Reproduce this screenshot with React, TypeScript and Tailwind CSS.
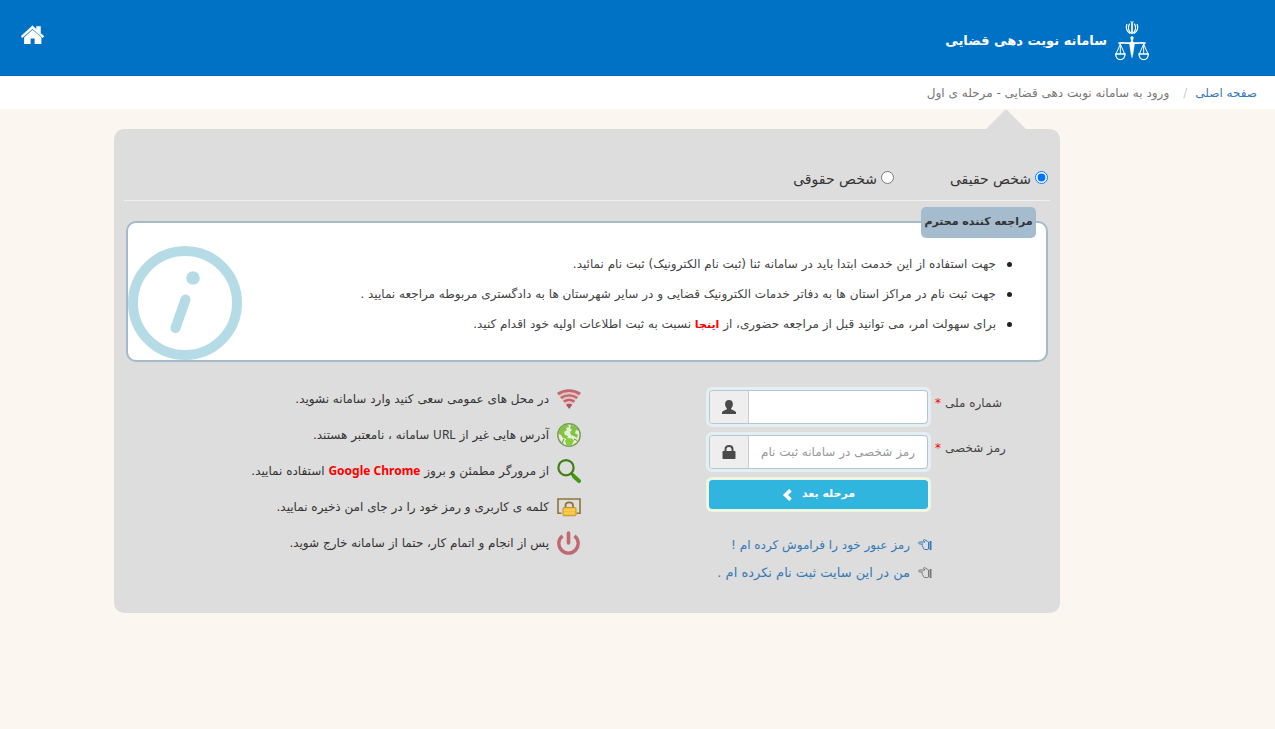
import type { ReactNode } from "react";

function JudiciaryLogo() {
  return (
    <svg viewBox="0 0 102 118" className="h-10 w-[34px] shrink-0" fill="none" stroke="#fff" strokeWidth="4" aria-hidden="true">
      <path d="M51 3v35" strokeWidth="5" />
      <path d="M44 7c-6 9-5 21 4 28M58 7c6 9 5 21-4 28" strokeWidth="3.5" />
      <path d="M36 8c-5 11-1 23 10 29M66 8c5 11 1 23-10 29" strokeWidth="3.5" />
      <path d="M46 1q5 3 10 0" strokeWidth="2.5" />
      <path d="M51 44l-5 5 3 8-2 6h8l-2-6 3-8z" fill="#fff" strokeWidth="1" />
      <path d="M10 66c14-5 26 3 41-2 15 5 27-3 41 2" strokeWidth="5" />
      <path d="M43 66h16l-5 32-3 12-3-12z" fill="#fff" strokeWidth="1" />
      <path d="M16 68L3 98M16 68l13 30M16 68v30" strokeWidth="3" />
      <path d="M86 68L73 98M86 68l13 30M86 68v30" strokeWidth="3" />
      <path d="M2 98h28c0 10-6 17-14 17S2 108 2 98zM72 98h28c0 10-6 17-14 17s-14-7-14-17z" />
    </svg>
  );
}

function HomeIcon() {
  return (
    <svg viewBox="0 0 24 20" className="h-5 w-6" aria-hidden="true">
      <path d="M11.500.8 15.500 4.500V1.400h4v6.800L23 11.300l-1.300 1.400L11.500 3.800 1.300 12.700 0 11.300z" fill="#fff" stroke="#fff" strokeWidth=".5" strokeLinejoin="round" />
      <path d="M11.500 4.700l8.900 7.800V19h-6.800v-5.500h-4V19h-6.500v-6.500z" fill="#fff" />
    </svg>
  );
}

function UserIcon() {
  return (
    <svg viewBox="0 0 14 14" className="size-3.5" fill="#4a4a4a" aria-hidden="true">
      <path d="M7 0c2.400 0 3.900 1.600 3.900 4 0 1.700-.7 3.300-1.700 4.200v1.100c.5.7 4.300 1.300 4.800 3V14H0v-1.700c.5-1.700 4.300-2.300 4.800-3V8.200C3.800 7.300 3.100 5.700 3.100 4 3.100 1.600 4.600 0 7 0z" />
    </svg>
  );
}

function LockIcon() {
  return (
    <svg viewBox="0 0 14 14" className="size-3.5" aria-hidden="true">
      <path d="M3.500 7V4.200C3.500 2.200 5 1 7 1s3.500 1.200 3.500 3.200V7" fill="none" stroke="#4a4a4a" strokeWidth="2" />
      <rect x=".5" y="6" width="13" height="8" rx=".7" fill="#4a4a4a" />
    </svg>
  );
}

function ChevronIcon() {
  return (
    <svg viewBox="0 0 10 12" className="h-3 w-2.5" aria-hidden="true">
      <path d="M8.500 1.200 3.500 6l5 4.800" fill="none" stroke="#fff" strokeWidth="3.600" />
    </svg>
  );
}

function HandIcon() {
  return (
    <svg viewBox="0 0 14 12" className="h-3 w-3.5 shrink-0" fill="none" stroke="currentColor" aria-hidden="true">
      <path d="M9.700 2.500 6.700.6C5.700.3 5.200 1.300 5.900 2L7 3H1.600C.3 3 .3 5 1.600 5H4.500C3.600 5.300 3.700 6.500 4.500 6.800c-.3.8.1 1.600.8 1.800-.1 1 .5 1.900 1.500 1.900h2.900c.3-.3.500-.5.800-.5V3c-.3 0-.6-.2-.8-.5z" strokeLinejoin="round" />
      <path d="M12.500 2v9" strokeWidth="2" />
    </svg>
  );
}

function WifiIcon() {
  return (
    <svg viewBox="0 0 24 24" className="size-6 shrink-0" fill="none" aria-hidden="true">
      <path d="M0 6C7 1.500 17 1.500 24 6L12.200 22z" fill="#e8c0c0" />
      <path d="M.9 7C7.500 2.600 16.500 2.600 23.100 7" stroke="#bd6a70" strokeWidth="2.800" />
      <path d="M3.800 11c5-3.300 11.500-3.300 16.500 0" stroke="#bd6a70" strokeWidth="2.500" />
      <path d="M6.700 14.700c3.400-2.300 7.400-2.300 10.800 0" stroke="#b9626a" strokeWidth="2.200" />
      <path d="M9 17.800q3.100-1.900 6.300 0L12.200 22z" fill="#b0525a" />
    </svg>
  );
}

function GlobeIcon() {
  return (
    <svg viewBox="0 0 24 24" className="size-6 shrink-0" aria-hidden="true">
      <circle cx="12" cy="12" r="11.200" fill="#e4efd9" stroke="#7a9a5a" strokeWidth="1.400" />
      <path d="M2 8C3.500 4 7 1.700 11 1.500l1 2.500-3 1 1 2-3 2 1 3 3 1-1 3-4-1-2-3-2.500-1z" fill="#82c341" />
      <path d="M14 2c4 .8 6.500 3 8 6l-3-1-1 3 3 2-1 3-3-2-3-1-1-3 2-2-2-2z" fill="#82c341" />
      <path d="M10 15l5 .5 2 2-2 4.500c-2 .7-4 .5-5.500 0L8 18z" fill="#8ccb3c" />
      <path d="M5 20l2-4M17 16l3 1.500" stroke="#5f8f35" />
    </svg>
  );
}

function SearchIcon() {
  return (
    <svg viewBox="0 0 24 24" className="size-6 shrink-0" fill="none" aria-hidden="true">
      <circle cx="9" cy="8.700" r="7.600" stroke="#3f7f14" strokeWidth="2.200" />
      <path d="M14.500 14.500l3 3" stroke="#3f7f14" strokeWidth="3" />
      <path d="M17 17.500l5 4.500" stroke="#3f9c0b" strokeWidth="4" strokeLinecap="round" />
    </svg>
  );
}

function PadlockIcon() {
  return (
    <svg viewBox="0 0 24 24" className="size-6 shrink-0" fill="none" aria-hidden="true">
      <path d="M4.500 18.200H1V4h22v14.200h-3.500" stroke="#8d7534" strokeWidth="1.600" />
      <path d="M8.500 13v-2.500c0-4.300 7.500-4.300 7.500 0V13" stroke="#8a7430" strokeWidth="1.800" />
      <rect x="6" y="12.500" width="13" height="8.300" rx="1" fill="#f3c037" stroke="#c4952a" />
      <path d="M7 15h11M7 18h11" stroke="#f8d768" />
    </svg>
  );
}

function PowerIcon() {
  return (
    <svg viewBox="0 0 24 24" className="size-6 shrink-0" fill="none" stroke="#c0696e" aria-hidden="true">
      <path d="M5.500 4.800a9.700 9.700 0 1 0 12 0" strokeWidth="3.400" />
      <path d="M11.500 2v10" strokeWidth="3.600" strokeLinecap="round" />
    </svg>
  );
}

function InfoIcon() {
  return (
    <svg viewBox="0 0 114 114" className="size-[114px] shrink-0" fill="none" stroke="#b5dce6" aria-hidden="true">
      <circle cx="57" cy="57" r="52" strokeWidth="10" />
      <circle cx="65" cy="32" r="6.800" fill="#b5dce6" stroke="none" />
      <path d="M57.500 53.500 47.500 82" strokeWidth="10" strokeLinecap="round" />
    </svg>
  );
}

const notices: ReactNode[] = [
  "جهت استفاده از این خدمت ابتدا باید در سامانه ثنا (ثبت نام الکترونیک) ثبت نام نمائید.",
  "جهت ثبت نام در مراکز استان ها به دفاتر خدمات الکترونیک قضایی و در سایر شهرستان ها به دادگستری مربوطه مراجعه نمایید .",
  <>
    برای سهولت امر، می توانید قبل از مراجعه حضوری، از{" "}
    <a href="#register" className="text-[11px] font-bold text-[#f00]">اینجا</a> نسبت به ثبت اطلاعات اولیه خود اقدام کنید.
  </>,
];

const tips: { icon: ReactNode; text: ReactNode }[] = [
  { icon: <WifiIcon />, text: "در محل های عمومی سعی کنید وارد سامانه نشوید." },
  {
    icon: <GlobeIcon />,
    text: (
      <>
        آدرس هایی غیر از <span className="font-['Noto_Sans']">URL</span> سامانه ، نامعتبر هستند.
      </>
    ),
  },
  {
    icon: <SearchIcon />,
    text: (
      <>
        از مرورگر مطمئن و بروز{" "}
        <b className="font-['Noto_Sans'] text-[#f00]">Google Chrome</b> استفاده نمایید.
      </>
    ),
  },
  { icon: <PadlockIcon />, text: "کلمه ی کاربری و رمز خود را در جای امن ذخیره نمایید." },
  { icon: <PowerIcon />, text: "پس از انجام و اتمام کار، حتما از سامانه خارج شوید." },
];

function Field(props: { id: string; label: string; type: string; placeholder?: string; icon: ReactNode }) {
  return (
    <div className="flex items-start gap-1">
      <label htmlFor={props.id} className="flex w-[72px] justify-end gap-1 pt-1.5 text-[12px] leading-5 whitespace-nowrap text-[#444]">
        {props.label}
        <span className="text-[#f00]">*</span>
      </label>
      <div className="w-[225px] rounded-md border-3 border-[#e3eef5]">
        <div className="flex h-[34px] overflow-hidden rounded border border-[#b5c7ce] bg-white">
          <input
            id={props.id}
            type={props.type}
            placeholder={props.placeholder}
            className="min-w-0 flex-1 px-3 text-[12px] text-[#555] outline-none placeholder:text-[#999]"
          />
          <span className="flex w-[39px] items-center justify-center border-r border-[#ccc] bg-[#eee]">{props.icon}</span>
        </div>
      </div>
    </div>
  );
}

export default function App() {
  return (
    <div dir="rtl" className="min-h-screen bg-[#fbf6ef] font-['DejaVu_Sans',sans-serif] text-[#333]">
      <header className="flex h-19 items-start justify-between bg-[#0072c6] pr-[126px] pl-[21px]">
        <div className="flex items-center gap-2 pt-[21px] text-white">
          <JudiciaryLogo />
          <h1 className="text-[13px] font-bold whitespace-nowrap">سامانه نوبت دهی قضایی</h1>
        </div>
        <a href="#home" aria-label="صفحه اصلی" className="pt-[25px]">
          <HomeIcon />
        </a>
      </header>

      <nav className="flex h-[33px] items-center gap-2 bg-white pr-[18px] text-[12px] whitespace-nowrap text-[#777]">
        <a href="#main" className="text-[#337ab7]">صفحه اصلی</a>
        <span className="text-[#ccc]">/</span>
        <span className="pr-1.5">ورود به سامانه نوبت دهی قضایی - مرحله ی اول</span>
      </nav>

      <main className="pr-[215px] pb-10 pl-[114px]">
        <svg viewBox="0 0 40 20" className="mr-[34px] h-5 w-10" aria-hidden="true">
          <path d="M20 0l20 20H0z" fill="#ddd" />
        </svg>
        <form className="rounded-[10px] bg-[#ddd] px-2.5 pb-[26px]" onSubmit={(e) => e.preventDefault()}>
          <div className="flex h-[72px] items-end gap-14 border-b border-[#f0f0f0] pb-2.5 text-[14px] whitespace-nowrap">
            <label className="flex items-center gap-1 pr-0.5">
              <input type="radio" name="person" defaultChecked className="mb-1 size-[13px]" />
              شخص حقیقی
            </label>
            <label className="flex items-center gap-1">
              <input type="radio" name="person" className="mb-1 size-[13px]" />
              شخص حقوقی
            </label>
          </div>

          <section className="relative mx-0.5 mt-5 flex h-[141px] justify-between rounded-[10px] border-2 border-[#a4bac9] bg-white">
            <h2 className="absolute -top-4 right-2.5 flex h-[31px] w-[115px] items-center justify-center rounded-[5px] bg-[#a4bccd] text-[11px] font-bold whitespace-nowrap">
              مراجعه کننده محترم
            </h2>
            <ul className="pt-[26px] pr-[34px] text-[12px] leading-[30px] whitespace-nowrap text-[#444]">
              {notices.map((notice, i) => (
                <li key={i} className="flex items-center gap-[11px] before:size-[5px] before:rounded-full before:bg-[#222]">
                  <span>{notice}</span>
                </li>
              ))}
            </ul>
            <div className="flex items-end">
              <InfoIcon />
            </div>
          </section>

          <div className="flex items-start pt-[25px] pr-[43px]">
            <div className="flex flex-col gap-[5px]">
              <Field id="national-id" label="شماره ملی" type="text" icon={<UserIcon />} />
              <Field id="password" label="رمز شخصی" type="password" placeholder="رمز شخصی در سامانه ثبت نام" icon={<LockIcon />} />
              <button
                type="submit"
                className="mr-[76px] flex h-[35px] w-[225px] items-center justify-center gap-2.5 rounded-md border-3 border-[#eff6e0] bg-[#2fb5de] bg-clip-padding text-[11px] font-bold text-white"
              >
                مرحله بعد
                <ChevronIcon />
              </button>
              <div className="mt-3.5 mr-[75px] flex flex-col leading-7 whitespace-nowrap text-[#337ab7]">
                <a href="#forgot" className="flex items-center gap-2 text-[12px]">
                  <HandIcon />
                  رمز عبور خود را فراموش کرده ام !
                </a>
                <a href="#signup" className="flex items-center gap-2 text-[13px]">
                  <span className="text-[#777]">
                    <HandIcon />
                  </span>
                  من در این سایت ثبت نام نکرده ام .
                </a>
              </div>
            </div>
            <ul className="mr-[125px] flex flex-col gap-3 text-[12px] whitespace-nowrap">
              {tips.map((tip, i) => (
                <li key={i} className="flex h-6 items-center gap-2">
                  {tip.icon}
                  <span>{tip.text}</span>
                </li>
              ))}
            </ul>
          </div>
        </form>
      </main>
    </div>
  );
}
